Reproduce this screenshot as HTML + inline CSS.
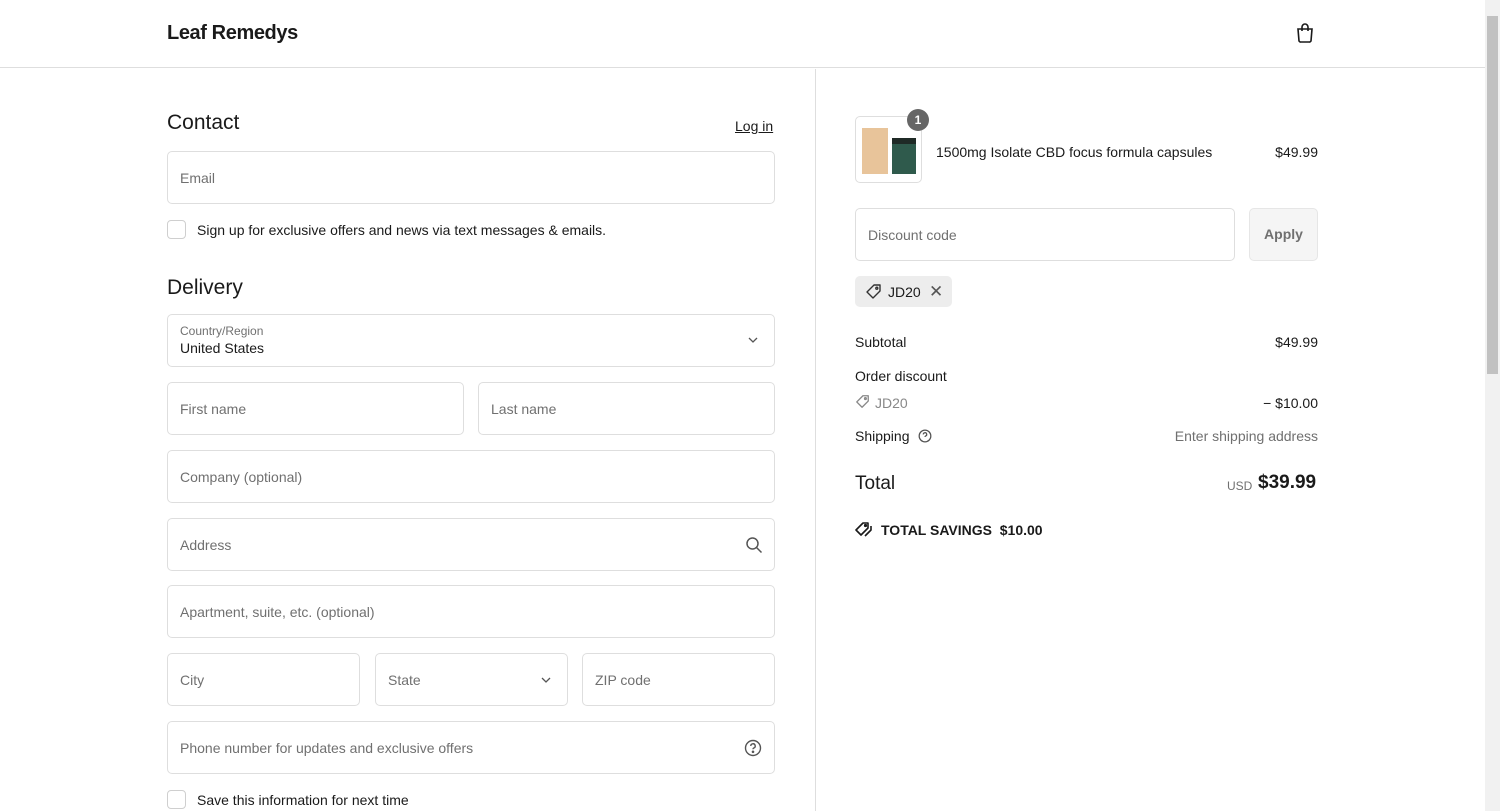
<!DOCTYPE html>
<html><head><meta charset="utf-8"><style>
*{box-sizing:border-box;margin:0;padding:0}
body{width:1500px;height:811px;overflow:hidden;background:#fff;font-family:"Liberation Sans",sans-serif;color:#1a1a1a;position:relative}
.a{position:absolute}
.in{position:absolute;border:1px solid #dedede;border-radius:5px;height:53px;background:#fff;font-size:14px;color:#707070;padding-left:12px;display:flex;align-items:center}
h2{position:absolute;font-size:21px;font-weight:normal;color:#1a1a1a}
.cb{position:absolute;width:19px;height:19px;border:1px solid #cfcfcf;border-radius:4px;left:167px}
.t{position:absolute;font-size:14px}
.r{text-align:right}
</style></head><body>
<div class="a" style="left:0;top:0;width:1485px;height:68px;border-bottom:1px solid #dedede"></div>
<div class="a" style="left:167px;top:22px;font-size:20px;font-weight:bold;letter-spacing:-0.4px">Leaf Remedys</div>
<svg class="a" style="left:1295px;top:22px" width="20" height="22" viewBox="0 0 20 22" fill="none" stroke="#1a1a1a" stroke-width="1.6"><path d="M3 7h14l-1 12a2 2 0 0 1-2 1H6a2 2 0 0 1-2-1z"/><path d="M7 9V5a3 3 0 0 1 6 0v4"/></svg>
<div class="a" style="left:1485px;top:0;width:15px;height:811px;background:#f1f1f1"></div>
<div class="a" style="left:1487px;top:16px;width:11px;height:358px;background:#c1c1c1"></div>
<div class="a" style="left:815px;top:69px;width:1px;height:742px;background:#dedede"></div>

<h2 style="left:167px;top:111px">Contact</h2>
<div class="t" style="left:735px;top:118px;text-decoration:underline">Log in</div>
<div class="in" style="left:167px;top:151px;width:608px">Email</div>
<div class="cb" style="top:220px"></div>
<div class="t" style="left:197px;top:222px">Sign up for exclusive offers and news via text messages &amp; emails.</div>
<h2 style="left:167px;top:276px">Delivery</h2>
<div class="in" style="left:167px;top:314px;width:608px;display:block;padding-top:9px"><div style="font-size:12px;color:#707070">Country/Region</div><div style="color:#1a1a1a;font-size:14px;margin-top:2px">United States</div></div>
<svg class="a" style="left:748px;top:337px" width="10" height="7" viewBox="0 0 10 7" fill="none" stroke="#555" stroke-width="1.3"><path d="M1 1l4 4 4-4"/></svg>
<div class="in" style="left:167px;top:382px;width:297px">First name</div>
<div class="in" style="left:478px;top:382px;width:297px">Last name</div>
<div class="in" style="left:167px;top:450px;width:608px">Company (optional)</div>
<div class="in" style="left:167px;top:518px;width:608px">Address</div>
<svg class="a" style="left:745px;top:536px" width="18" height="18" viewBox="0 0 18 18" fill="none" stroke="#555" stroke-width="1.5"><circle cx="7.5" cy="7.5" r="5.5"/><path d="M11.5 11.5l5 5"/></svg>
<div class="in" style="left:167px;top:585px;width:608px">Apartment, suite, etc. (optional)</div>
<div class="in" style="left:167px;top:653px;width:193px">City</div>
<div class="in" style="left:375px;top:653px;width:193px">State</div>
<svg class="a" style="left:541px;top:677px" width="10" height="7" viewBox="0 0 10 7" fill="none" stroke="#555" stroke-width="1.3"><path d="M1 1l4 4 4-4"/></svg>
<div class="in" style="left:582px;top:653px;width:193px">ZIP code</div>
<div class="in" style="left:167px;top:721px;width:608px">Phone number for updates and exclusive offers</div>
<svg class="a" style="left:744px;top:739px" width="18" height="18" viewBox="0 0 18 18" fill="none" stroke="#555" stroke-width="1.4"><circle cx="9" cy="9" r="7.5"/><path d="M6.8 7a2.2 2.2 0 1 1 3 2c-.6.3-.8.7-.8 1.3"/><circle cx="9" cy="12.8" r=".6" fill="#555"/></svg>
<div class="cb" style="top:790px"></div>
<div class="t" style="left:197px;top:792px">Save this information for next time</div>

<div class="a" style="left:855px;top:116px;width:67px;height:67px;border:1px solid #dedede;border-radius:5px;background:#fff"></div>
<div class="a" style="left:862px;top:128px;width:26px;height:46px;background:#e8c49a"></div>
<div class="a" style="left:892px;top:138px;width:24px;height:36px;background:#2f5a4c;border-top:6px solid #1f2a26"></div>
<div class="a" style="left:907px;top:109px;width:22px;height:22px;border-radius:11px;background:#666;color:#fff;font-size:12px;font-weight:bold;text-align:center;line-height:22px">1</div>
<div class="t" style="left:936px;top:144px">1500mg Isolate CBD focus formula capsules</div>
<div class="t r" style="left:1218px;top:144px;width:100px">$49.99</div>
<div class="in" style="left:855px;top:208px;width:380px">Discount code</div>
<div class="a" style="left:1249px;top:208px;width:69px;height:53px;border:1px solid #e6e6e6;border-radius:5px;background:#f5f5f5;color:#707070;font-size:14px;font-weight:bold;text-align:center;line-height:51px">Apply</div>
<div class="a" style="left:855px;top:276px;width:97px;height:31px;border-radius:5px;background:#ededed"></div>
<svg class="a" style="left:865px;top:283px" width="17" height="17" viewBox="0 0 17 17" fill="none" stroke="#333" stroke-width="1.4" stroke-linejoin="round"><path d="M2 9L9 2h6v6l-7 7z"/><circle cx="11.8" cy="5.2" r="1"/></svg>
<div class="t" style="left:888px;top:284px">JD20</div>
<div class="t" style="left:929px;top:282px;font-size:17px;color:#555">✕</div>

<div class="t" style="left:855px;top:334px">Subtotal</div>
<div class="t r" style="left:1218px;top:334px;width:100px">$49.99</div>
<div class="t" style="left:855px;top:368px">Order discount</div>
<svg class="a" style="left:855px;top:394px" width="15" height="15" viewBox="0 0 17 17" fill="none" stroke="#888" stroke-width="1.5" stroke-linejoin="round"><path d="M2 9L9 2h6v6l-7 7z"/><circle cx="11.8" cy="5.2" r="1"/></svg>
<div class="t" style="left:875px;top:395px;color:#888">JD20</div>
<div class="t r" style="left:1218px;top:395px;width:100px">− $10.00</div>
<div class="t" style="left:855px;top:428px">Shipping</div>
<svg class="a" style="left:918px;top:429px" width="14" height="14" viewBox="0 0 18 18" fill="none" stroke="#555" stroke-width="1.6"><circle cx="9" cy="9" r="7.5"/><path d="M6.8 7a2.2 2.2 0 1 1 3 2c-.6.3-.8.7-.8 1.3"/></svg>
<div class="t r" style="left:1118px;top:428px;width:200px;color:#707070">Enter shipping address</div>
<div class="a" style="left:855px;top:473px;font-size:19px">Total</div>
<div class="a" style="left:1227px;top:479px;font-size:12px;color:#707070">USD</div>
<div class="a" style="left:1258px;top:472px;font-size:19px;font-weight:bold">$39.99</div>
<svg class="a" style="left:855px;top:521px" width="18" height="17" viewBox="0 0 18 17" fill="none" stroke="#1a1a1a" stroke-width="1.6" stroke-linejoin="round"><path d="M1 9l7-7h5v5l-7 7z"/><path d="M16 5v4l-6 6"/><circle cx="10.5" cy="4.5" r=".8"/></svg>
<div class="t" style="left:881px;top:522px;font-weight:bold;font-size:14px">TOTAL SAVINGS&nbsp; $10.00</div>
</body></html>
